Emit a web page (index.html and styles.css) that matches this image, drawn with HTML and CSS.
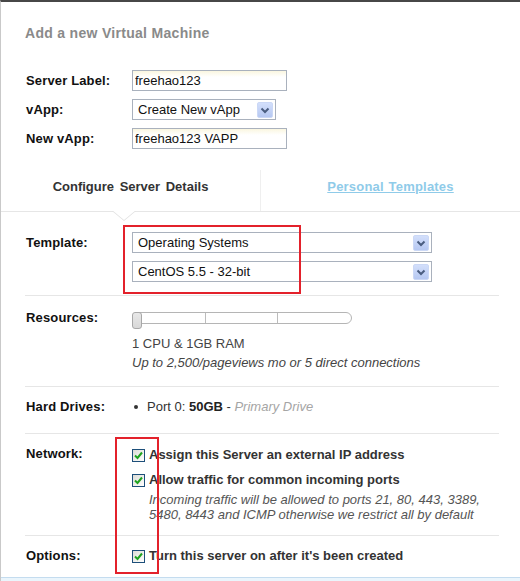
FILE: index.html
```html
<!DOCTYPE html>
<html lang="en">
<head>
<meta charset="utf-8">
<title>Add a new Virtual Machine</title>
<link rel="stylesheet" href="styles.css">
</head>
<body>
<div class="panel">
  <h1 class="title">Add a new Virtual Machine</h1>

  <div class="basic">
    <div class="frow">
      <label class="lbl">Server Label:</label>
      <input class="txt" type="text" value="freehao123">
    </div>
    <div class="frow">
      <label class="lbl">vApp:</label>
      <div class="sel sel-s"><span>Create New vApp</span><span class="arr"><svg width="14" height="14" viewBox="0 0 14 14"><polyline points="3.5,5.5 7,9 10.5,5.5" fill="none" stroke="#4a5d80" stroke-width="2"/></svg></span></div>
    </div>
    <div class="frow">
      <label class="lbl">New vApp:</label>
      <input class="txt" type="text" value="freehao123 VAPP">
    </div>
  </div>

  <div class="tabs">
    <div class="tab tab-active">Configure Server Details</div>
    <div class="tab tab-other"><a href="#" class="tab-link">Personal Templates</a></div>
  </div>

  <div class="sections">
    <div class="sec sec-template">
      <div class="lbl slbl">Template:</div>
      <div class="stack">
        <div class="sel sel-w"><span>Operating Systems</span><span class="arr"><svg width="14" height="14" viewBox="0 0 14 14"><polyline points="3.5,5.5 7,9 10.5,5.5" fill="none" stroke="#4a5d80" stroke-width="2"/></svg></span></div>
        <div class="sel sel-w"><span>CentOS 5.5 - 32-bit</span><span class="arr"><svg width="14" height="14" viewBox="0 0 14 14"><polyline points="3.5,5.5 7,9 10.5,5.5" fill="none" stroke="#4a5d80" stroke-width="2"/></svg></span></div>
      </div>
    </div>

    <div class="sec sec-res">
      <div class="lbl slbl">Resources:</div>
      <div>
        <div class="slider">
          <div class="track"><span class="seg"></span><span class="seg"></span><span class="seg seg-last"></span></div>
          <span class="handle"></span>
        </div>
        <div class="res-main">1 CPU &amp; 1GB RAM</div>
        <div class="res-sub">Up to 2,500/pageviews mo or 5 direct connections</div>
      </div>
    </div>

    <div class="sec sec-hd">
      <div class="lbl slbl">Hard Drives:</div>
      <div class="hd"><span class="dot"></span><span>Port 0: <b>50GB</b> - <i class="muted">Primary Drive</i></span></div>
    </div>

    <div class="sec sec-net">
      <div class="lbl slbl">Network:</div>
      <div>
        <div class="chk"><span class="cb"><svg width="11" height="11" viewBox="0 0 11 11"><polyline points="2,5.5 4.5,8 9,2.5" fill="none" stroke="#1fa31f" stroke-width="2"/></svg></span>Assign this Server an external IP address</div>
        <div class="chk chk-2"><span class="cb"><svg width="11" height="11" viewBox="0 0 11 11"><polyline points="2,5.5 4.5,8 9,2.5" fill="none" stroke="#1fa31f" stroke-width="2"/></svg></span>Allow traffic for common incoming ports</div>
        <div class="note">Incoming traffic will be allowed to ports 21, 80, 443, 3389,<br>5480, 8443 and ICMP otherwise we restrict all by default</div>
      </div>
    </div>

    <div class="sec sec-opt">
      <div class="lbl slbl">Options:</div>
      <div class="chk"><span class="cb"><svg width="11" height="11" viewBox="0 0 11 11"><polyline points="2,5.5 4.5,8 9,2.5" fill="none" stroke="#1fa31f" stroke-width="2"/></svg></span>Turn this server on after it's been created</div>
    </div>
  </div>

  <div class="strip"></div>

  <div class="mark mark-1"></div>
  <div class="mark mark-2"></div>
</div>
</body>
</html>
```

FILE: styles.css
```css
* { box-sizing: border-box; }
html, body { margin: 0; height: 100%; }
body {
  font-family: "Liberation Sans", Arial, sans-serif;
  font-size: 13px;
  color: #333;
  background: #fff;
  overflow: hidden;
}
.panel {
  position: relative;
  height: 581px;
  border-top: 2px solid #474747;
  border-left: 1px solid #c9c9c9;
  display: flex;
  flex-direction: column;
}
.title {
  margin: 0;
  padding: 21px 0 0 24px;
  font-size: 14px;
  line-height: 20px;
  font-weight: bold;
  letter-spacing: 0.3px;
  color: #8a8a8a;
}
.basic {
  padding: 27px 0 0 25px;
  display: flex;
  flex-direction: column;
  gap: 8px;
}
.frow {
  display: grid;
  grid-template-columns: 106px auto;
  align-items: center;
}
.lbl { font-weight: bold; color: #111; letter-spacing: 0.15px; }
.txt {
  width: 155px;
  height: 21px;
  margin: 0;
  padding: 0 2px;
  border: 1px solid #a9b1bd;
  font: 13px "Liberation Sans", Arial, sans-serif;
  color: #111;
  background: linear-gradient(#faf6e0, #fff 6px);
  outline: none;
}
.sel {
  display: flex;
  align-items: center;
  justify-content: space-between;
  height: 21px;
  padding: 0 2px 0 5px;
  border: 1px solid #a9b1bd;
  color: #111;
  background: #fff;
}
.sel-s { width: 144px; }
.sel-w { width: 300px; }
.arr {
  width: 16px;
  height: 16px;
  display: flex;
  align-items: center;
  justify-content: center;
  border: 1px solid #cbd8f6;
  border-radius: 2px;
  background: linear-gradient(#d3dffb, #b6c8f2);
}
.tabs {
  display: flex;
  height: 42px;
  margin-top: 21px;
  border-bottom: 1px solid #e6e6e6;
}
.tab {
  padding-top: 8px;
  line-height: 18px;
  text-align: center;
  font-weight: bold;
  word-spacing: 2px;
  color: #333;
}
.tab-active {
  position: relative;
  flex: 0 0 260px;
  border-right: 1px solid #efefef;
}
.tab-active::before,
.tab-active::after {
  content: "";
  position: absolute;
  left: 111px;
  width: 0;
  height: 0;
  border-left: 12px solid transparent;
  border-right: 12px solid transparent;
}
.tab-active::before { top: 41px; border-top: 10px solid #e2e2e2; }
.tab-active::after { top: 40px; border-top: 10px solid #fff; }
.tab-other { flex: 1; }
.tab-link { color: #8fcbe9; text-decoration: underline; word-spacing: 1px; letter-spacing: 0.2px; }
.sections { padding: 0 21px 0 24px; }
.sec {
  display: grid;
  grid-template-columns: 107px 1fr;
  border-bottom: 1px solid #e6e6e6;
}
.slbl { padding-left: 1px; }
.sec-template { padding: 20px 0 13px; }
.sec-template .slbl { line-height: 21px; }
.stack { display: flex; flex-direction: column; gap: 8px; }
.sec-res { padding: 13px 0 13px; }
.sec-res .slbl { line-height: 17px; }
.slider { position: relative; width: 220px; height: 17px; }
.track {
  display: grid;
  grid-template-columns: 73px 72px 1fr;
  height: 12px;
  margin-top: 3px;
  border: 1px solid #b5b5b5;
  border-radius: 6px;
  background: #fff;
  overflow: hidden;
}
.seg { border-right: 1px solid #bcbcbc; }
.seg-last { border-right: none; }
.handle {
  position: absolute;
  left: 0;
  top: 0;
  width: 10px;
  height: 17px;
  border: 1px solid #a8a8a8;
  border-radius: 3px;
  background: linear-gradient(#e8e8e8, #d8d8d8);
}
.res-main { margin-top: 6px; line-height: 18px; color: #444; }
.res-sub { line-height: 20px; font-style: italic; color: #444; }
.sec-hd { padding: 10px 0 16px; line-height: 20px; }
.hd { display: flex; align-items: center; color: #333; }
.dot {
  width: 4px;
  height: 4px;
  margin: 0 9px 0 2px;
  border-radius: 50%;
  background: #333;
}
.hd b { color: #222; }
.muted { color: #a5a5a5; }
.sec-net { padding: 12px 0 13px; }
.sec-net .slbl { line-height: 16px; }
.chk {
  display: flex;
  align-items: center;
  gap: 4px;
  line-height: 18px;
  font-weight: bold;
  color: #333;
}
.chk-2 { margin-top: 7px; }
.cb {
  flex: none;
  width: 13px;
  height: 13px;
  display: flex;
  align-items: center;
  justify-content: center;
  border: 1px solid #1d4f7a;
  background: linear-gradient(135deg, #dcdcd6, #fff);
}
.note {
  margin-top: 3px;
  padding-left: 17px;
  line-height: 15px;
  font-style: italic;
  color: #555;
}
.sec-opt { padding: 11px 0 12px; border-bottom: none; }
.sec-opt .slbl { line-height: 18px; }
.strip {
  flex: 1;
  border-top: 1px solid #c4dcef;
  background: #eaf5fc;
}
.mark {
  position: absolute;
  border: 2px solid #e3212b;
}
.mark-1 { left: 122px; top: 223px; width: 178px; height: 69px; }
.mark-2 { left: 114px; top: 435px; width: 44px; height: 137px; }
```
